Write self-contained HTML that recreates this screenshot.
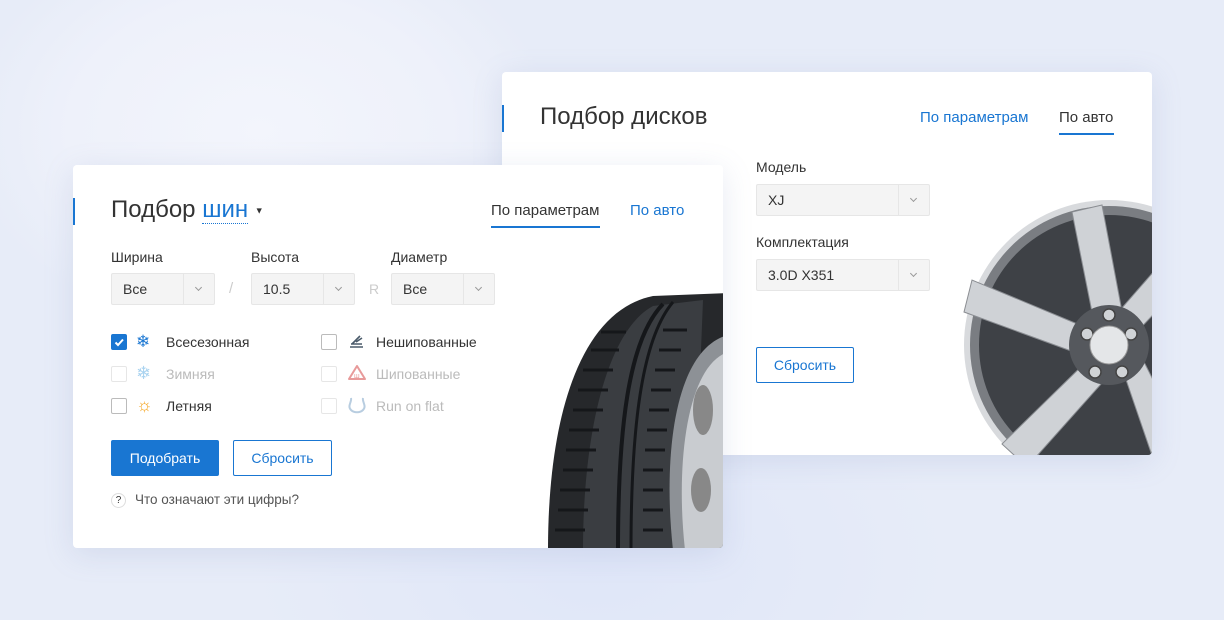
<!DOCTYPE html>
<html><head><meta charset="utf-8"><style>
*{box-sizing:border-box;margin:0;padding:0}
body{width:1224px;height:620px;overflow:hidden;position:relative;font-family:"Liberation Sans","DejaVu Sans",sans-serif;color:#333;
background:radial-gradient(ellipse 420px 300px at 260px 130px,#f3f5fc 0%,#eef1fa 45%,rgba(230,235,248,0) 70%),radial-gradient(ellipse 500px 320px at 600px 560px,#dfe6f8 0%,rgba(230,235,248,0) 70%),#e7ecf8;}
.card{position:absolute;background:#fff;border-radius:4px;box-shadow:0 6px 30px rgba(120,140,190,.18)}
.accent{position:absolute;left:0;width:2px;background:#1976d2}
.t{position:absolute;white-space:nowrap}
.title{font-size:24px;color:#333}
.tab{font-size:15px}
.blue{color:#1976d2}
.lbl{font-size:14px;color:#333}
.sel{position:absolute;height:32px;background:#f4f4f4;border:1px solid #e6e6e6;border-radius:2px;font-size:14px;color:#333}
.sel span{position:absolute;left:11px;top:7px}
.sel i{position:absolute;right:0;top:0;width:31px;height:30px;border-left:1px solid #e6e6e6}
.sel i:after{content:"";position:absolute;left:12px;top:11px;width:4px;height:4px;border-right:1px solid #999;border-bottom:1px solid #999;transform:rotate(45deg)}
.cb{position:absolute;width:16px;height:16px;border:1px solid #bbb;border-radius:2px;background:#fff}
.cb.dis{border-color:#e6e6e6}
.ct{position:absolute;font-size:14px}
.btn{position:absolute;height:36px;font-size:14px;text-align:center;line-height:34px;border-radius:2px}
</style></head><body>

<!-- back card -->
<div class="card" style="left:502px;top:72px;width:650px;height:383px;overflow:hidden">
  <div class="accent" style="top:33px;height:27px"></div>
  <div class="t title" style="left:38px;top:31px">Подбор дисков</div>
  <div class="t tab blue" style="left:418px;top:37px">По параметрам</div>
  <div class="t tab" style="left:557px;top:37px">По авто</div>
  <div style="position:absolute;left:557px;top:61px;width:55px;height:2px;background:#1976d2"></div>
  <div class="t lbl" style="left:254px;top:87px">Модель</div>
  <div class="sel" style="left:254px;top:112px;width:174px"><span>XJ</span><i></i></div>
  <div class="t lbl" style="left:254px;top:162px">Комплектация</div>
  <div class="sel" style="left:254px;top:187px;width:174px"><span>3.0D X351</span><i></i></div>
  <div class="btn blue" style="left:254px;top:275px;width:98px;border:1px solid #1976d2">Сбросить</div>
  <svg style="position:absolute;left:455px;top:120px" width="200" height="270" viewBox="455 120 200 270">
    <circle cx="607" cy="273" r="145" fill="#d8dadd"/>
    <circle cx="607" cy="273" r="139" fill="#7a7d82"/>
    <circle cx="607" cy="273" r="130" fill="#3e4146"/>
    <g fill="#cfd2d6" stroke="#8a8d92" stroke-width="1">
      <path d="M592 250 L570 140 L600 133 L622 250Z"/>
      <path d="M585 256 L470 208 L462 240 L583 284Z"/>
      <path d="M588 286 L500 372 L525 395 L608 302Z"/>
      <path d="M620 296 L655 398 L690 385 L638 282Z"/>
      <path d="M630 265 L720 170 L695 150 L612 245Z"/>
    </g>
    <circle cx="607" cy="273" r="40" fill="#55585d"/>
    <g fill="#d0d3d6" stroke="#444" stroke-width="1.5">
      <circle cx="585" cy="262" r="6"/><circle cx="607" cy="243" r="6"/><circle cx="629" cy="262" r="6"/>
      <circle cx="620" cy="300" r="6"/><circle cx="593" cy="300" r="6"/>
    </g>
    <circle cx="607" cy="273" r="19" fill="#e4e6e8" stroke="#999"/>
  </svg>
</div>

<!-- front card -->
<div class="card" style="left:73px;top:165px;width:650px;height:383px;overflow:hidden">
  <div class="accent" style="top:33px;height:27px"></div>
  <div class="t title" style="left:38px;top:31px">Подбор <span class="blue" style="border-bottom:1px dotted #1976d2">шин</span> <span style="font-size:9px;vertical-align:middle">▼</span></div>
  <div class="t tab" style="left:418px;top:37px">По параметрам</div>
  <div style="position:absolute;left:418px;top:61px;width:109px;height:2px;background:#1976d2"></div>
  <div class="t tab blue" style="left:557px;top:37px">По авто</div>
  <div class="t lbl" style="left:38px;top:84px">Ширина</div>
  <div class="t lbl" style="left:178px;top:84px">Высота</div>
  <div class="t lbl" style="left:318px;top:84px">Диаметр</div>
  <div class="sel" style="left:38px;top:108px;width:104px"><span>Все</span><i></i></div>
  <div class="t" style="left:156px;top:115px;color:#ccc;font-size:15px">/</div>
  <div class="sel" style="left:178px;top:108px;width:104px"><span>10.5</span><i></i></div>
  <div class="t" style="left:296px;top:116px;color:#ccc;font-size:14px">R</div>
  <div class="sel" style="left:318px;top:108px;width:104px"><span>Все</span><i></i></div>

  <div class="cb" style="left:38px;top:169px;background:#1976d2;border-color:#1976d2"><svg width="14" height="14" viewBox="0 0 14 14"><path d="M3.5 7.5l2.5 2.5 5-5.5" stroke="#fff" stroke-width="2" fill="none"/></svg></div>
  <div class="t" style="left:63px;top:167px;font-size:17px;color:#1976d2">❄</div>
  <div class="ct" style="left:93px;top:169px">Всесезонная</div>
  <div class="cb dis" style="left:38px;top:201px"></div>
  <div class="t" style="left:63px;top:198px;font-size:18px;color:#a9d3f0">❄</div>
  <div class="ct" style="left:93px;top:201px;color:#bbb">Зимняя</div>
  <div class="cb" style="left:38px;top:233px"></div>
  <div class="t" style="left:63px;top:230px;font-size:18px;color:#f5a623">☼</div>
  <div class="ct" style="left:93px;top:233px">Летняя</div>

  <div class="cb" style="left:248px;top:169px"></div>
  <svg style="position:absolute;left:274px;top:168px" width="18" height="18"><path d="M3 14h13M4 11h11M5 11l8-8M9 9l6-4" stroke="#4a5a6a" stroke-width="1.6" fill="none"/></svg>
  <div class="ct" style="left:303px;top:169px">Нешипованные</div>
  <div class="cb dis" style="left:248px;top:201px"></div>
  <svg style="position:absolute;left:274px;top:199px" width="20" height="18"><path d="M10 2L18 15H2Z" stroke="#e89a9a" stroke-width="2" fill="none" stroke-linejoin="round"/><text x="7" y="14" font-size="7" fill="#e89a9a" font-family="Liberation Sans">ш</text></svg>
  <div class="ct" style="left:303px;top:201px;color:#bbb">Шипованные</div>
  <div class="cb dis" style="left:248px;top:233px"></div>
  <svg style="position:absolute;left:274px;top:231px" width="20" height="18"><path d="M4 2c1 4-4 8 0 12 3 3 9 3 12 0 4-4-1-8 0-12" stroke="#b8cde0" stroke-width="2" fill="none"/></svg>
  <div class="ct" style="left:303px;top:233px;color:#bbb">Run on flat</div>

  <div class="btn" style="left:38px;top:275px;width:108px;background:#1976d2;color:#fff;border:1px solid #1976d2">Подобрать</div>
  <div class="btn blue" style="left:160px;top:275px;width:99px;border:1px solid #1976d2">Сбросить</div>
  <div class="t" style="left:38px;top:328px;width:15px;height:15px;border:1px solid #ddd;border-radius:50%;font-size:10px;text-align:center;line-height:13px">?</div>
  <div class="t" style="left:62px;top:327px;font-size:13.5px;color:#555">Что означают эти цифры?</div>

  <svg style="position:absolute;left:445px;top:125px" width="205" height="260" viewBox="-5 0 205 260">
    <path d="M25 260 C25 120 60 20 130 6 L205 3 L205 260Z" fill="#26282b"/>
    <path d="M60 260 C60 140 85 40 130 16 L180 10 L170 260Z" fill="#3a3d41"/>
    <g stroke="#15171a" stroke-width="3">
      <path d="M32 240h30M35 220h30M37 200h30M40 180h30M43 160h30M46 140h30M50 120h30M55 100h30M60 80h30M68 60h28M78 42h25"/>
      <path d="M120 240h20M120 220h20M120 200h20M120 180h20M122 160h20M124 140h20M126 120h20M128 100h20M132 80h20M136 60h22M140 40h24"/>
    </g>
    <path d="M95 260 C95 140 105 50 140 14" stroke="#15171a" stroke-width="4" fill="none"/>
    <path d="M108 260 C108 140 118 50 150 12" stroke="#15171a" stroke-width="3" fill="none"/>
    <path d="M150 260 C140 170 150 60 205 45 L205 260Z" fill="#8d9196"/>
    <path d="M162 260 C152 170 165 75 205 62 L205 260Z" fill="#c9ccd0"/>
    <ellipse cx="180" cy="120" rx="10" ry="25" fill="#888"/>
    <ellipse cx="178" cy="200" rx="10" ry="22" fill="#888"/>
  </svg>
</div>
</body></html>
